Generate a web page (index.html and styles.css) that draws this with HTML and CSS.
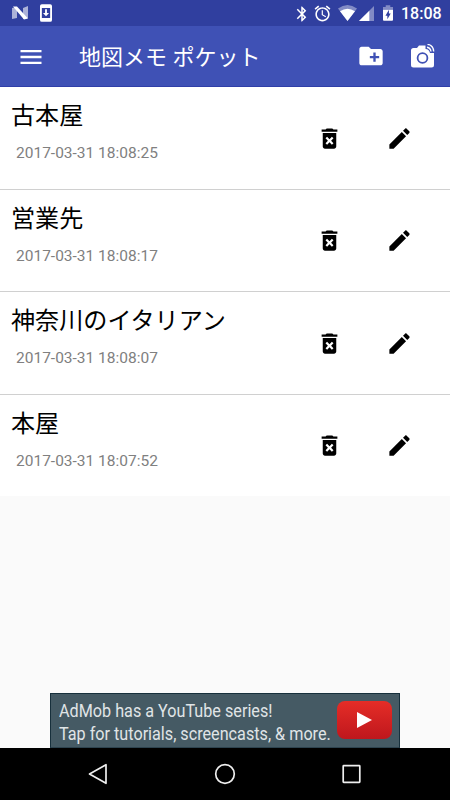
FILE: index.html
```html
<!DOCTYPE html>
<html lang="ja">
<head>
  <meta charset="UTF-8">
  <meta name="viewport" content="width=device-width, initial-scale=1">
  <title>地図メモ ポケット</title>
  <link rel="stylesheet" href="styles.css">
</head>
<body>

  <svg class="defs">
    <symbol id="delete" viewBox="0 0 24 24">
      <path d="M6 19c0 1.1.9 2 2 2h8c1.1 0 2-.9 2-2V7H6v12zm2.46-7.12l1.41-1.41L12 12.59l2.12-2.12 1.41 1.41L13.41 14l2.12 2.12-1.41 1.41L12 15.41l-2.12 2.12-1.41-1.41L10.59 14l-2.13-2.12zM15.5 4l-1-1h-5l-1 1H5v2h14V4z"/>
    </symbol>
    <symbol id="edit" viewBox="0 0 24 24">
      <path d="M3 17.25V21h3.75L17.81 9.94l-3.75-3.75L3 17.25zM20.71 7.04c.39-.39.39-1.02 0-1.41l-2.34-2.34c-.39-.39-1.02-.39-1.41 0l-1.83 1.83 3.75 3.75 1.83-1.83z"/>
    </symbol>
  </svg>

  <div class="status">
    <svg class="nougat" width="17" height="14" viewBox="0 0 17 14">
      <path d="M0 2l5-1v11l-5 1zM11 2l5-2v12l-5 1z" opacity=".6"/>
      <path d="M1 0.500h4l11 12-4 1z"/>
    </svg>
    <svg class="download" width="12" height="18" viewBox="0 0 13 19">
      <path fill-rule="evenodd" d="M2 0h9q2 0 2 2v15q0 2-2 2H2q-2 0-2-2V2q0-2 2-2zM2 4v11h9V4zM5.5 5.5h2v4h2.3l-3.3 3.6-3.3-3.6h2.3z"/>
    </svg>
    <div class="status-right">
      <svg class="bt" width="18" height="18" viewBox="0 0 24 24">
        <path d="M17.71 7.71L12 2h-1v7.59L6.41 5 5 6.41 10.59 12 5 17.59 6.41 19 11 14.41V22h1l5.71-5.71-4.3-4.29 4.3-4.29zM13 5.83l1.88 1.88L13 9.59V5.83zm1.88 10.46L13 18.17v-3.76l1.88 1.88z"/>
      </svg>
      <svg class="alarm" width="19" height="19" viewBox="0 0 24 24">
        <path d="M22 5.72l-4.6-3.86-1.29 1.53 4.6 3.86L22 5.72zM7.88 3.39L6.6 1.86 2 5.71l1.29 1.53 4.59-3.85zM12.5 8H11v6l4.75 2.85.75-1.23-4-2.37V8zM12 4c-4.97 0-9 4.03-9 9s4.02 9 9 9c4.97 0 9-4.03 9-9s-4.03-9-9-9zm0 16c-3.87 0-7-3.13-7-7s3.13-7 7-7 7 3.13 7 7-3.13 7-7 7z"/>
      </svg>
      <svg class="wifi" width="19" height="16" viewBox="0 0 19 16">
        <path d="M0 3.5Q9.5-3.5 19 3.5L9.5 16z" opacity=".4"/>
        <path d="M2 6.3Q9.5 1 17 6.3L9.5 16z"/>
      </svg>
      <svg class="signal" width="15" height="15" viewBox="0 0 16 16">
        <path d="M16 0v16H0z" opacity=".4"/>
        <path d="M11 5v11H0z"/>
      </svg>
      <svg class="battery" width="10" height="16" viewBox="0 0 11 17">
        <path d="M0 2h3V0h5v2h3v3H0z" opacity=".4"/>
        <path fill-rule="evenodd" d="M0 5h11v11q0 1-1 1H1q-1 0-1-1zM6.5 5L2.7 11.5h2.1V15.500L8.5 9H6.5z"/>
      </svg>
      <span class="clock">18:08</span>
    </div>
  </div>

  <header>
    <svg class="menu" width="28" height="28" viewBox="0 0 24 24">
      <path d="M3 18h18v-2H3v2zm0-5h18v-2H3v2zm0-7v2h18V6H3z"/>
    </svg>
    <h1>地図メモ ポケット</h1>
    <svg class="folder" width="28" height="28" viewBox="0 0 24 24">
      <path d="M20 6h-8l-2-2H4c-1.11 0-1.99.89-1.99 2L2 18c0 1.11.89 2 2 2h16c1.11 0 2-.89 2-2V8c0-1.11-.89-2-2-2zm-1 8h-3v3h-2v-3h-3v-2h3V9h2v3h3v2z"/>
    </svg>
    <svg class="camera" width="24" height="24" viewBox="0 0 24 24">
      <path fill-rule="evenodd" d="M2.5 4H6l2-2.5h6.500V5q3.500 0 4.500 4H23V21q0 2.500-2.500 2.500h-18Q0 23.500 0 21V6.500Q0 4 2.500 4zM11.500 8.200a5.800 5.800 0 1 0 0 11.600 5.800 5.800 0 0 0 0-11.600z"/>
      <circle cx="11.5" cy="14" r="4"/>
      <path class="wave" d="M16 3.300Q19.500 3.900 20 7.500M16.500 .4Q22.200 1 22.700 7.500"/>
    </svg>
  </header>

  <main>
    <div class="memo">
      <div class="memo-text">
        <h2>古本屋</h2>
        <p>2017-03-31 18:08:25</p>
      </div>
      <svg class="icon"><use href="#delete"/></svg>
      <svg class="icon"><use href="#edit"/></svg>
    </div>
    <div class="memo">
      <div class="memo-text">
        <h2>営業先</h2>
        <p>2017-03-31 18:08:17</p>
      </div>
      <svg class="icon"><use href="#delete"/></svg>
      <svg class="icon"><use href="#edit"/></svg>
    </div>
    <div class="memo">
      <div class="memo-text">
        <h2>神奈川のイタリアン</h2>
        <p>2017-03-31 18:08:07</p>
      </div>
      <svg class="icon"><use href="#delete"/></svg>
      <svg class="icon"><use href="#edit"/></svg>
    </div>
    <div class="memo">
      <div class="memo-text">
        <h2>本屋</h2>
        <p>2017-03-31 18:07:52</p>
      </div>
      <svg class="icon"><use href="#delete"/></svg>
      <svg class="icon"><use href="#edit"/></svg>
    </div>
  </main>

  <div class="ad">
    <div class="ad-text">
      <div class="ad-line">AdMob has a YouTube series!</div>
      <div class="ad-line">Tap for tutorials, screencasts, &amp; more.</div>
    </div>
    <div class="play">
      <svg width="15" height="16" viewBox="0 0 15 16"><path d="M0 0l15 8-15 8z"/></svg>
    </div>
  </div>

  <nav>
    <svg width="22" height="22" viewBox="0 0 22 22"><path d="M19 1.7v18.6L2.5 11z"/></svg>
    <svg width="22" height="22" viewBox="0 0 22 22"><circle cx="11" cy="11" r="9.3"/></svg>
    <svg width="22" height="22" viewBox="0 0 22 22"><rect x="2.2" y="2.7" width="16.6" height="16.6" rx=".5"/></svg>
  </nav>

</body>
</html>
```
FILE: styles.css
```css
body {
  font-family: Roboto, "Noto Sans CJK JP", sans-serif;
  margin: 0;
  height: 800px;
  display: flex;
  flex-direction: column;
  background-color: #fafafa;
  overflow: hidden;
}

svg {
  flex-shrink: 0;
}

.defs {
  display: none;
}

.status {
  height: 26px;
  display: flex;
  align-items: center;
  box-sizing: border-box;
  padding: 0 9px 0 12px;
  background-color: #303f9f;
  color: white;
  fill: white;
}

.nougat {
  margin-right: 11px;
}

.status-right {
  display: flex;
  align-items: center;
  margin-left: auto;
}

.bt {
  margin-top: 2px;
  margin-right: 2px;
}

.alarm {
  margin-right: 6px;
}

.wifi {
  margin-right: 2px;
}

.signal {
  margin-right: 9px;
}

.battery {
  margin-right: 8px;
}

.clock {
  font-size: 16px;
  font-weight: 500;
  line-height: 26px;
  padding-top: 2px;
  width: 40px;
  white-space: nowrap;
}

header {
  height: 61px;
  display: flex;
  align-items: center;
  box-sizing: border-box;
  padding: 0 15px 0 17px;
  background-color: #3f51b5;
  border-bottom: 1px solid #303fa8;
  color: white;
  fill: white;
}

header h1 {
  font-size: 22px;
  font-weight: 400;
  line-height: 32px;
  margin: 3px 0 0 34px;
  flex: 1;
}

.menu {
  margin-top: 1px;
}

.folder {
  margin-right: -1px;
}

.camera {
  margin-left: 27px;
}

.wave {
  fill: none;
  stroke: white;
  stroke-width: 1.4;
}

.memo {
  height: 102.5px;
  display: flex;
  align-items: flex-start;
  box-sizing: border-box;
  padding-right: 37.5px;
  background-color: white;
  border-bottom: 1px solid #d0d0d0;
}

.memo:last-child {
  height: 101.5px;
  border-bottom: none;
}

.memo-text {
  flex: 1;
  padding: 11px 0 0 11px;
}

.memo h2 {
  font-size: 24.1px;
  font-weight: 400;
  line-height: 36px;
  margin: 0;
  color: #000;
}

.memo p {
  font-size: 15.5px;
  line-height: 20px;
  margin: 9px 0 0 5px;
  color: #808080;
}

.icon {
  width: 27px;
  height: 27px;
  margin-top: 37.5px;
  margin-left: 43px;
}

.ad {
  width: 350px;
  height: 55px;
  display: flex;
  box-sizing: border-box;
  margin: auto auto 0;
  border: 1px solid #17303c;
  border-bottom-color: #2d434f;
  background-color: #455a64;
}

.ad-text {
  width: 278px;
  padding: 5px 0 0 8px;
}

.ad-line {
  font-size: 19px;
  line-height: 23px;
  white-space: nowrap;
  color: #e0e5e7;
  transform: scaleX(.852);
  transform-origin: left;
}

.play {
  width: 55px;
  height: 38px;
  display: flex;
  align-items: center;
  justify-content: center;
  box-sizing: border-box;
  margin-top: 7px;
  border-radius: 8px;
  background: linear-gradient(#e52d27, #bf171d);
  fill: white;
}

nav {
  height: 52px;
  display: flex;
  align-items: center;
  justify-content: center;
  gap: 105px;
  background-color: #000;
  fill: none;
  stroke: #eee;
  stroke-width: 1.7;
  stroke-linejoin: round;
}
```
